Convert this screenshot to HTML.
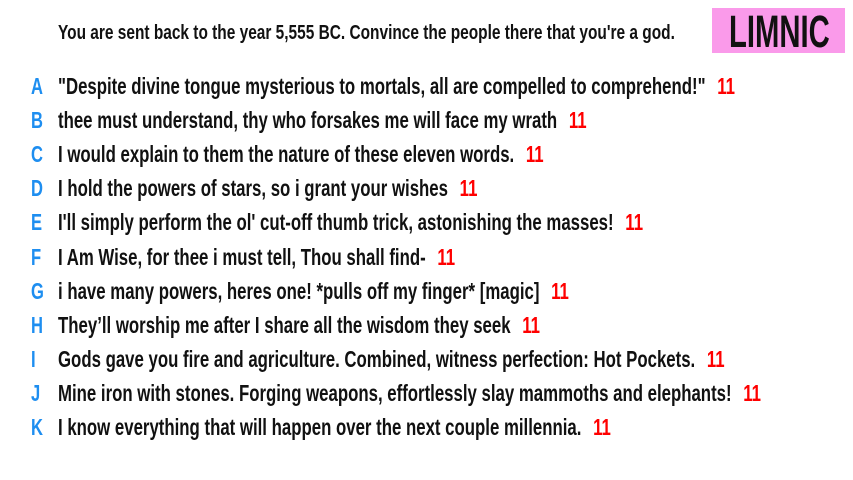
<!DOCTYPE html>
<html><head><style>
body{margin:0;width:853px;height:480px;background:#fff;font-family:"Liberation Sans",sans-serif;overflow:hidden;position:relative}
.t{position:absolute;white-space:nowrap;transform-origin:left center;transform:scaleX(0.73);font-weight:bold}
.h{left:58px;top:22px;font-size:20px;color:#111;transform:scaleX(0.772)}
.logo{position:absolute;left:712px;top:8px;width:133px;height:45px;background:#fa9aea}
.logo span{position:absolute;left:17px;top:-2px;font-size:45px;font-weight:bold;color:#111;white-space:nowrap;transform:scaleX(0.65);transform-origin:left top}
.r{position:absolute;left:0;height:34px;font-size:23px;color:#111}
.l{position:absolute;left:31px;color:#1e8ef0;font-weight:bold;transform:scaleX(0.72);transform-origin:left center}
.r .t{left:58px;top:0}
.n{color:#f00;margin-left:16px}
</style></head><body>
<div class="t h">You are sent back to the year 5,555 BC. Convince the people there that you're a god.</div>
<div class="logo"><span>LIMNIC</span></div>
<div class="r" style="top:73px"><span class="l">A</span><span class="t">"Despite divine tongue mysterious to mortals, all are compelled to comprehend!"<span class="n">11</span></span></div>
<div class="r" style="top:107px"><span class="l">B</span><span class="t">thee must understand, thy who forsakes me will face my wrath<span class="n">11</span></span></div>
<div class="r" style="top:141px"><span class="l">C</span><span class="t">I would explain to them the nature of these eleven words.<span class="n">11</span></span></div>
<div class="r" style="top:175px"><span class="l">D</span><span class="t">I hold the powers of stars, so i grant your wishes<span class="n">11</span></span></div>
<div class="r" style="top:209px"><span class="l">E</span><span class="t">I'll simply perform the ol' cut-off thumb trick, astonishing the masses!<span class="n">11</span></span></div>
<div class="r" style="top:244px"><span class="l">F</span><span class="t">I Am Wise, for thee i must tell, Thou shall find-<span class="n">11</span></span></div>
<div class="r" style="top:278px"><span class="l">G</span><span class="t">i have many powers, heres one! *pulls off my finger* [magic]<span class="n">11</span></span></div>
<div class="r" style="top:312px"><span class="l">H</span><span class="t">They’ll worship me after I share all the wisdom they seek<span class="n">11</span></span></div>
<div class="r" style="top:346px"><span class="l">I</span><span class="t">Gods gave you fire and agriculture. Combined, witness perfection: Hot Pockets.<span class="n">11</span></span></div>
<div class="r" style="top:380px"><span class="l">J</span><span class="t">Mine iron with stones. Forging weapons, effortlessly slay mammoths and elephants!<span class="n">11</span></span></div>
<div class="r" style="top:414px"><span class="l">K</span><span class="t">I know everything that will happen over the next couple millennia.<span class="n">11</span></span></div>
</body></html>
